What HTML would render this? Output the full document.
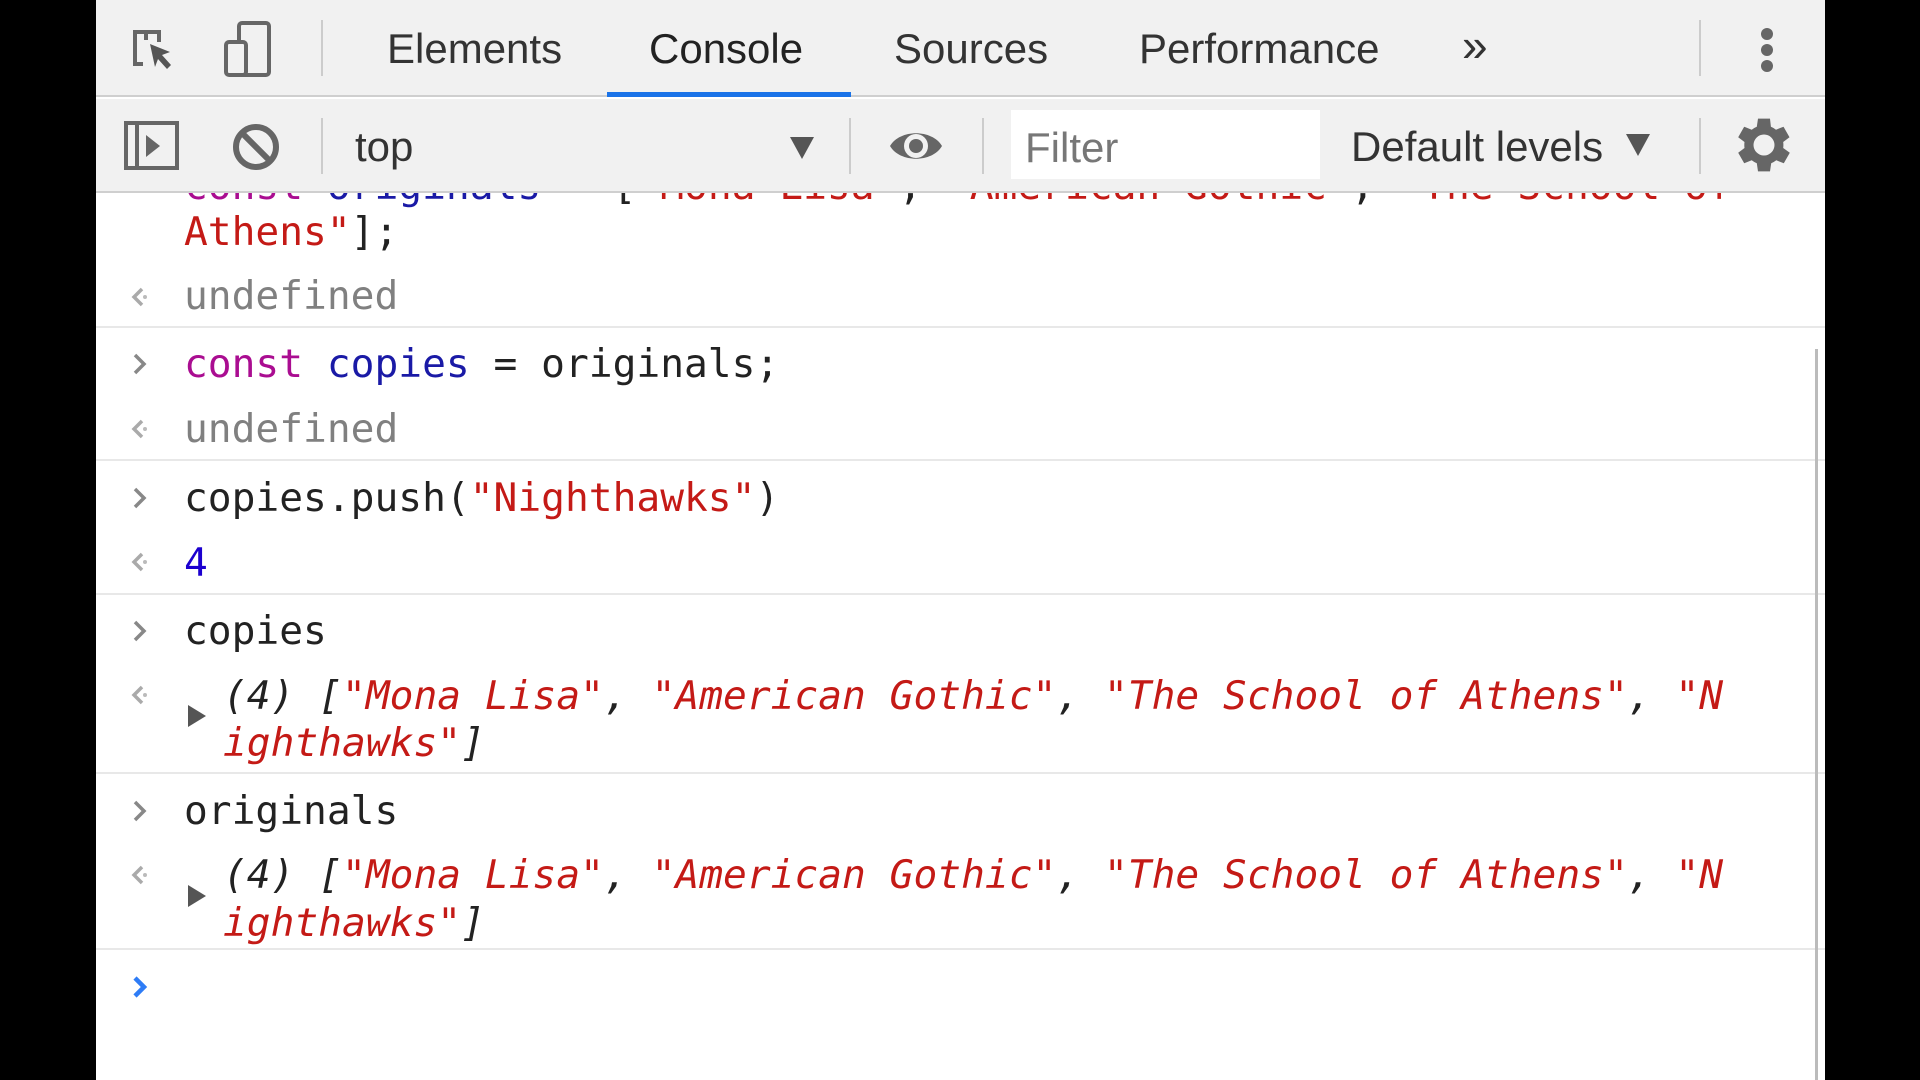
<!DOCTYPE html>
<html><head><meta charset="utf-8"><style>
*{margin:0;padding:0;box-sizing:border-box}
body{width:1920px;height:1080px;background:#000;overflow:hidden;position:relative}
#p{position:absolute;left:96px;top:0;width:1729px;height:1080px;background:#fff;overflow:hidden}
.bar{position:absolute;left:0;width:100%;background:#f1f1f1}
.t{position:absolute;font-family:"Liberation Sans",Arial,sans-serif;font-size:42px;color:#333;line-height:46px;white-space:nowrap}
.sep{position:absolute;width:2px;background:#ccc}
.m{position:absolute;font-family:"DejaVu Sans Mono","Liberation Mono",monospace;font-size:39.55px;line-height:46px;white-space:nowrap;color:#222}
.hr{position:absolute;left:0;width:100%;height:2px;background:#e8e8e8}
.s{color:#c41a16}.k{color:#aa0d91}.v{color:#1c00cf}.n{color:#1a1aa6}.g{color:#808080}
.i{font-style:italic}
.ar{position:absolute;left:33px;width:20px;height:26px}
</style></head><body>
<div id="p">
<div class="m" style="left:88px;top:163px"><span class="k">const</span> <span class="n">originals</span> = [<span class="s">"Mona Lisa"</span>, <span class="s">"American Gothic"</span>, <span class="s">"The School of</span></div>
<div class="m s" style="left:88px;top:209px">Athens"<span style="color:#222">];</span></div>
<svg class="ar" style="top:284px" viewBox="0 0 20 26"><path d="M13 5L5 13l8 8" fill="none" stroke="#aaa" stroke-width="3.5"/><circle cx="16" cy="13" r="2" fill="#bbb"/></svg>
<div class="m g" style="left:88px;top:273px">undefined</div>
<div class="hr" style="top:326px"></div>
<svg class="ar" style="top:351px" viewBox="0 0 20 26"><path d="M6 4l9 9-9 9" fill="none" stroke="#888" stroke-width="3.5"/></svg>
<div class="m" style="left:88px;top:341px"><span class="k">const</span> <span class="n">copies</span> = originals;</div>
<svg class="ar" style="top:416px" viewBox="0 0 20 26"><path d="M13 5L5 13l8 8" fill="none" stroke="#aaa" stroke-width="3.5"/><circle cx="16" cy="13" r="2" fill="#bbb"/></svg>
<div class="m g" style="left:88px;top:406px">undefined</div>
<div class="hr" style="top:459px"></div>
<svg class="ar" style="top:485px" viewBox="0 0 20 26"><path d="M6 4l9 9-9 9" fill="none" stroke="#888" stroke-width="3.5"/></svg>
<div class="m" style="left:88px;top:475px">copies.push(<span class="s">"Nighthawks"</span>)</div>
<svg class="ar" style="top:549px" viewBox="0 0 20 26"><path d="M13 5L5 13l8 8" fill="none" stroke="#aaa" stroke-width="3.5"/><circle cx="16" cy="13" r="2" fill="#bbb"/></svg>
<div class="m v" style="left:88px;top:540px">4</div>
<div class="hr" style="top:593px"></div>
<svg class="ar" style="top:618px" viewBox="0 0 20 26"><path d="M6 4l9 9-9 9" fill="none" stroke="#888" stroke-width="3.5"/></svg>
<div class="m" style="left:88px;top:608px">copies</div>
<svg class="ar" style="top:682px" viewBox="0 0 20 26"><path d="M13 5L5 13l8 8" fill="none" stroke="#aaa" stroke-width="3.5"/><circle cx="16" cy="13" r="2" fill="#bbb"/></svg>
<div style="position:absolute;left:92px;top:705px;width:0;height:0;border-left:18px solid #555;border-top:11px solid transparent;border-bottom:11px solid transparent"></div>
<div class="m i" style="left:127px;top:673px">(4) [<span class="s">"Mona Lisa"</span>, <span class="s">"American Gothic"</span>, <span class="s">"The School of Athens"</span>, <span class="s">"N</span></div>
<div class="m i" style="left:127px;top:720px"><span class="s">ighthawks"</span>]</div>
<div class="hr" style="top:772px"></div>
<svg class="ar" style="top:798px" viewBox="0 0 20 26"><path d="M6 4l9 9-9 9" fill="none" stroke="#888" stroke-width="3.5"/></svg>
<div class="m" style="left:88px;top:788px">originals</div>
<svg class="ar" style="top:862px" viewBox="0 0 20 26"><path d="M13 5L5 13l8 8" fill="none" stroke="#aaa" stroke-width="3.5"/><circle cx="16" cy="13" r="2" fill="#bbb"/></svg>
<div style="position:absolute;left:92px;top:885px;width:0;height:0;border-left:18px solid #555;border-top:11px solid transparent;border-bottom:11px solid transparent"></div>
<div class="m i" style="left:127px;top:852px">(4) [<span class="s">"Mona Lisa"</span>, <span class="s">"American Gothic"</span>, <span class="s">"The School of Athens"</span>, <span class="s">"N</span></div>
<div class="m i" style="left:127px;top:900px"><span class="s">ighthawks"</span>]</div>
<div class="hr" style="top:948px"></div>
<svg class="ar" style="top:974px" viewBox="0 0 20 26"><path d="M6 4l9 9-9 9" fill="none" stroke="#2e7cf6" stroke-width="4.5"/></svg>
<div style="position:absolute;left:1719px;top:349px;width:3px;height:731px;background:#bbb"></div>

<div class="bar" style="top:0;height:97px;border-bottom:2px solid #cfcfcf"></div>
<svg style="position:absolute;left:34px;top:26px" width="50" height="50" viewBox="0 0 50 50"><path d="M16 6H5v32h8" fill="none" stroke="#666" stroke-width="4"/><path d="M16 8v6M4 6h25v10" fill="none" stroke="#666" stroke-width="4"/><path d="M20 18l20 8-8 3 9 10-4 4-9-10-3 8z" fill="#555"/></svg>
<svg style="position:absolute;left:127px;top:20px" width="54" height="60" viewBox="0 0 54 60"><rect x="16" y="3" width="30" height="52" rx="3" fill="none" stroke="#666" stroke-width="4"/><rect x="3" y="22" width="20" height="33" rx="3" fill="#f1f1f1" stroke="#666" stroke-width="4"/></svg>
<div class="sep" style="left:225px;top:20px;height:56px"></div>
<div class="t" style="left:291px;top:26px">Elements</div>
<div class="t" style="left:553px;top:26px;color:#222">Console</div>
<div style="position:absolute;left:511px;top:92px;width:244px;height:5px;background:#1a73e8"></div>
<div class="t" style="left:798px;top:26px">Sources</div>
<div class="t" style="left:1043px;top:26px">Performance</div>
<div class="t" style="left:1366px;top:22px;font-size:46px">&raquo;</div>
<div class="sep" style="left:1603px;top:20px;height:56px"></div>
<div style="position:absolute;left:1665px;top:28px;width:12px;height:12px;border-radius:6px;background:#666;box-shadow:0 16px 0 #666,0 32px 0 #666"></div>

<div class="bar" style="top:99px;height:94px;border-bottom:2px solid #cfcfcf"></div>
<svg style="position:absolute;left:28px;top:121px" width="56" height="50" viewBox="0 0 56 50"><rect x="2" y="2" width="51" height="45" fill="none" stroke="#666" stroke-width="4"/><path d="M13 2v45" stroke="#666" stroke-width="4"/><path d="M22 14l14 11-14 11z" fill="#666"/></svg>
<svg style="position:absolute;left:135px;top:122px" width="50" height="50" viewBox="0 0 50 50"><circle cx="25" cy="25" r="20" fill="none" stroke="#666" stroke-width="6"/><path d="M11 11l28 28" stroke="#666" stroke-width="6"/></svg>
<div class="sep" style="left:225px;top:118px;height:56px"></div>
<div class="t" style="left:259px;top:124px">top</div>
<div style="position:absolute;left:694px;top:137px;border-top:22px solid #555;border-left:12px solid transparent;border-right:12px solid transparent"></div>
<div class="sep" style="left:753px;top:118px;height:56px"></div>
<svg style="position:absolute;left:791px;top:124px" width="58" height="44" viewBox="0 0 58 44"><path d="M3 22C13 5 45 5 55 22C45 39 13 39 3 22z" fill="#666"/><circle cx="29" cy="22" r="12" fill="#f1f1f1"/><circle cx="29" cy="22" r="7" fill="#666"/></svg>
<div class="sep" style="left:886px;top:118px;height:56px"></div>
<div style="position:absolute;left:915px;top:110px;width:309px;height:69px;background:#fff"></div>
<div class="t" style="left:929px;top:125px;color:#777">Filter</div>
<div class="t" style="left:1255px;top:124px">Default levels</div>
<div style="position:absolute;left:1530px;top:134px;border-top:22px solid #555;border-left:12px solid transparent;border-right:12px solid transparent"></div>
<div class="sep" style="left:1603px;top:118px;height:56px"></div>
<svg style="position:absolute;left:1632px;top:109px" width="72" height="72" viewBox="0 0 24 24"><path fill="#666" d="M19.4 13a7.5 7.5 0 0 0 0-2l2.1-1.6-2-3.5-2.5 1a7.6 7.6 0 0 0-1.7-1L15 3.2h-4l-.4 2.7a7.6 7.6 0 0 0-1.7 1l-2.5-1-2 3.5L6.5 11a7.5 7.5 0 0 0 0 2l-2.1 1.6 2 3.5 2.5-1a7.6 7.6 0 0 0 1.7 1l.4 2.7h4l.4-2.7a7.6 7.6 0 0 0 1.7-1l2.5 1 2-3.5zM13 15.5a3.5 3.5 0 1 1 0-7 3.5 3.5 0 0 1 0 7z" transform="translate(-1 0)"/></svg>
</div>
</body></html>
